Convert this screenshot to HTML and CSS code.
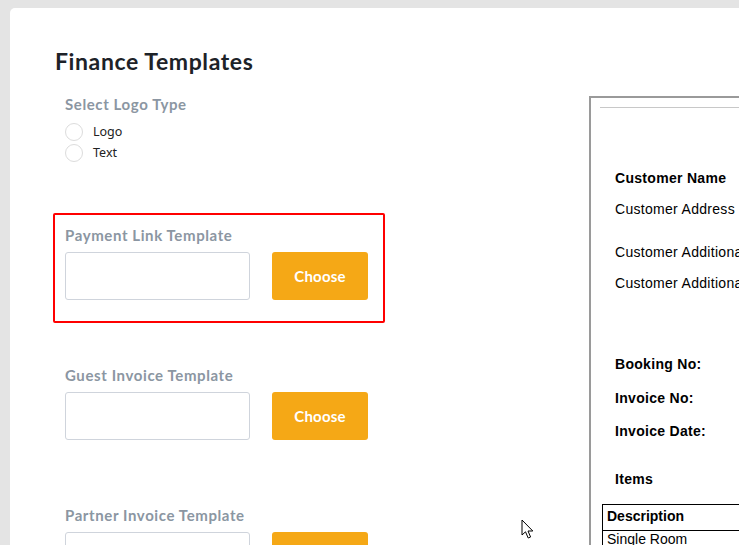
FILE: index.html
```html
<!DOCTYPE html>
<html lang="en">
<head>
<meta charset="utf-8">
<title>Finance Templates</title>
<link rel="stylesheet" href="styles.css">
</head>
<body>
<div class="card">
  <div class="form-col">
    <h1 class="title">Finance Templates</h1>
    <div class="group group-logo">
      <div class="group-label">Select Logo Type</div>
      <label class="radio-row"><span class="radio"></span><span class="radio-text">Logo</span></label>
      <label class="radio-row"><span class="radio"></span><span class="radio-text">Text</span></label>
    </div>
    <div class="group group-template highlighted">
      <div class="group-label">Payment Link Template</div>
      <div class="field-row">
        <div class="file-input"></div>
        <button class="choose-btn">Choose</button>
      </div>
    </div>
    <div class="group group-template">
      <div class="group-label">Guest Invoice Template</div>
      <div class="field-row">
        <div class="file-input"></div>
        <button class="choose-btn">Choose</button>
      </div>
    </div>
    <div class="group group-template">
      <div class="group-label">Partner Invoice Template</div>
      <div class="field-row">
        <div class="file-input"></div>
        <button class="choose-btn">Choose</button>
      </div>
    </div>
  </div>
  <div class="preview">
    <div class="preview-inner">
      <div class="rule"></div>
      <div class="doc">
        <div class="line bold cust-name">Customer Name</div>
        <div class="line cust-addr">Customer Address</div>
        <div class="line cust-add1">Customer Additional Info 1</div>
        <div class="line cust-add2">Customer Additional Info 2</div>
        <div class="line bold booking">Booking No:</div>
        <div class="line bold inv-no">Invoice No:</div>
        <div class="line bold inv-date">Invoice Date:</div>
        <div class="line bold items">Items</div>
      </div>
      <table class="items-table">
        <tr><th>Description</th><th>Quantity</th><th>Price</th></tr>
        <tr><td>Single Room</td><td>1</td><td>100.00</td></tr>
      </table>
    </div>
  </div>
</div>
<svg class="cursor" width="14" height="22" viewBox="0 0 14 22" xmlns="http://www.w3.org/2000/svg">
  <path d="M1 1 L1 16 L4.5 12.8 L7.2 19 L9.6 18 L7 12 L11.8 12 Z" fill="#fff" stroke="#000" stroke-width="1" stroke-linejoin="round"/>
</svg>
</body>
</html>
```
FILE: styles.css
```css
html, body {
  margin: 0;
  padding: 0;
  overflow: hidden;
  width: 739px;
  height: 545px;
}
body {
  background: #e4e4e4;
  position: relative;
  font-family: "Lato", "Open Sans", sans-serif;
}
.card {
  margin: 8px 0 0 10px;
  background: #fff;
  border-radius: 5px 0 0 0;
  height: 700px;
  padding: 39px 0 0 43px;
  display: flex;
  box-sizing: border-box;
  width: 1000px;
}
.form-col {
  flex: 0 0 536px;
  display: flex;
  flex-direction: column;
  align-items: flex-start;
}
.title {
  margin: 0 0 7px 2px;
  font-size: 23px;
  line-height: 28px;
  font-weight: 700;
  color: #1d2228;
  letter-spacing: 0.6px;
  flex-shrink: 0;
}
.group {
  border: 2px solid transparent;
  border-radius: 2px;
  padding: 11px 15px 19px 10px;
  margin-bottom: 30px;
  width: 332px;
  box-sizing: border-box;
  flex-shrink: 0;
}
.group-template {
  height: 110px;
}
.highlighted {
  border-color: #f00;
}
.group-label {
  font-size: 15px;
  line-height: 18px;
  font-weight: 700;
  color: #8b96a2;
  letter-spacing: 0.6px;
}
.group-logo .group-label {
  margin-bottom: 7px;
}
.group-template .group-label {
  margin-bottom: 8px;
}
.radio-row {
  display: flex;
  align-items: center;
  height: 21px;
  position: relative;
  top: 1px;
}
.radio {
  width: 18px;
  height: 18px;
  border: 1px solid #dcdcdc;
  border-radius: 50%;
  box-sizing: border-box;
  margin-right: 10px;
}
.radio-text {
  font-family: "Noto Sans", "Open Sans", sans-serif;
  font-size: 12.5px;
  color: #222;
}
.field-row {
  display: flex;
  gap: 22px;
}
.file-input {
  width: 185px;
  height: 48px;
  border: 1px solid #cfd4dc;
  border-radius: 3px;
  box-sizing: border-box;
}
.choose-btn {
  width: 96px;
  height: 48px;
  border: none;
  border-radius: 3px;
  background: #f5a816;
  color: #fff;
  font-family: "Lato", "Open Sans", sans-serif;
  font-weight: 700;
  font-size: 15px;
  letter-spacing: 0.2px;
  padding: 0;
}
.preview {
  margin-top: 49px;
  width: 420px;
  border-top: 2px solid #9a9a9a;
  border-left: 2px solid #9a9a9a;
  align-self: flex-start;
  height: 520px;
}
.preview-inner {
  padding: 9px 0 0 9px;
}
.rule {
  height: 1px;
  background: #c8c8c8;
}
.doc {
  padding-left: 15px;
  font-family: "Liberation Sans", Arial, sans-serif;
  font-size: 14px;
  letter-spacing: 0.3px;
  color: #000;
}
.line {
  line-height: 16px;
  white-space: nowrap;
}
.bold { font-weight: 700; }
.cust-name { margin-top: 62px; }
.cust-addr { margin-top: 15px; }
.cust-add1 { margin-top: 27px; }
.cust-add2 { margin-top: 15px; }
.booking { margin-top: 65px; }
.inv-no { margin-top: 18px; }
.inv-date { margin-top: 17px; }
.items { margin-top: 32px; }
.items-table {
  margin: 17px 0 0 2px;
  border-collapse: collapse;
  font-family: "Liberation Sans", Arial, sans-serif;
  font-size: 14px;
  width: 400px;
}
.items-table th, .items-table td {
  border: 1px solid #000;
  text-align: left;
  padding: 0 4px;
  white-space: nowrap;
  vertical-align: top;
}
.items-table th {
  font-weight: 700;
  width: 200px;
  height: 26px;
  padding-top: 3px;
  box-sizing: border-box;
}
.items-table td { height: 22px; padding-top: 0; }
.cursor {
  position: absolute;
  left: 521px;
  top: 519px;
}
```
